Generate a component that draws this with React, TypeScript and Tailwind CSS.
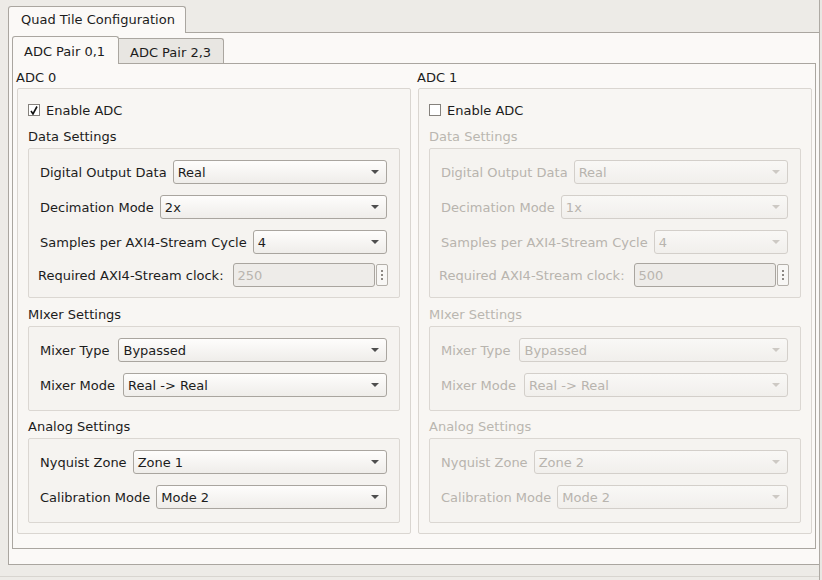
import React from 'react';

type Field = { label: string; value: string; shift?: number };

interface SectionProps {
  title: string;
  fields: Field[];
  disabled: boolean;
  extra?: string;
}

const Arrow = ({ disabled }: { disabled: boolean }) => (
  <svg width="8" height="4" viewBox="0 0 8 4">
    <path d="M0 0H8L4 4Z" fill={disabled ? '#cdc9c4' : '#4e4e4e'} />
  </svg>
);

const Combo = ({ value, disabled }: { value: string; disabled: boolean }) => (
  <div
    className={`flex-1 h-[24px] flex items-center justify-between rounded-[3px] border pl-[4px] pr-[7px] ${
      disabled
        ? 'border-[#d3cfca] bg-linear-to-b from-[#f9f8f6] to-[#f1efec] text-[#b8b4ae]'
        : 'border-[#a9a59f] bg-linear-to-b from-[#fefdfc] to-[#efedea] text-[#1c1c1c]'
    }`}
  >
    <span className="pt-px">{value}</span>
    <Arrow disabled={disabled} />
  </div>
);

const ClockRow = ({ value, disabled }: { value: string; disabled: boolean }) => (
  <div className="flex items-center h-[24px] -ml-[2px] -mr-[1px] -mt-[2px]">
    <span className={`pt-px whitespace-nowrap ${disabled ? 'text-[#b8b4ae]' : ''}`}>Required AXI4-Stream clock:</span>
    <div className="flex-1 ml-[9px] h-[24px] flex items-center rounded-[3px] border border-[#a9a59f] bg-[#eeece9] pl-[4px] pt-px text-[#b9b5af]">
      {value}
    </div>
    <div className="ml-[1px] w-[12px] h-[22px] rounded-[2px] border border-[#b3afa9] bg-[#f8f7f5] flex flex-col items-center justify-center gap-[2px]">
      <span className="w-[2px] h-[2px] bg-[#8c8883]" />
      <span className="w-[2px] h-[2px] bg-[#8c8883]" />
      <span className="w-[2px] h-[2px] bg-[#8c8883]" />
    </div>
  </div>
);

const Section: React.FC<SectionProps> = ({ title, fields, disabled, extra }) => (
  <>
    <div className={`h-[16px] pt-px ${disabled ? 'text-[#bab6b0]' : ''}`}>{title}</div>
    <div
      className={`mt-[4px] border border-[#dbd7d2] rounded-[2px] bg-[#f5f3f0] pt-[11px] pl-[11px] pr-[12px] flex flex-col gap-[11px] ${
        extra ? 'pb-[10px]' : 'pb-[13px]'
      }`}
    >
      {fields.map(f => (
        <div key={f.label} className="flex items-center h-[24px]">
          <span className={`pt-px whitespace-nowrap ${disabled ? 'text-[#b8b4ae]' : ''}`}>{f.label}</span>
          <div className={`flex-1 flex ${f.shift === 3 ? 'ml-[9px]' : f.shift === 2 ? 'ml-[8px]' : 'ml-[6px]'}`}>
            <Combo value={f.value} disabled={disabled} />
          </div>
        </div>
      ))}
      {extra && <ClockRow value={extra} disabled={disabled} />}
    </div>
  </>
);

interface AdcProps {
  name: string;
  enabled: boolean;
  decimation: string;
  clock: string;
  zone: string;
}

const AdcColumn: React.FC<AdcProps> = ({ name, enabled, decimation, clock, zone }) => {
  const off = !enabled;
  return (
    <div className="w-[394px] flex flex-col">
      <div className="h-[16px] -ml-px pt-px">{name}</div>
      <div className="mt-[3px] h-[446px] border border-[#dad6d1] rounded-[2px] bg-[#f8f6f3] px-[10px] flex flex-col">
        <div className="mt-[11px] h-[20px] flex items-center">
          <div className="w-[12px] h-[12px] border border-[#85817c] bg-white flex items-center justify-center">
            {enabled && (
              <svg width="8" height="9" viewBox="0 0 8 9">
                <path d="M1 5 L3 8 L7 0.5" stroke="#111" strokeWidth="1.6" fill="none" />
              </svg>
            )}
          </div>
          <span className="ml-[6px] pt-px">Enable ADC</span>
        </div>
        <div className="mt-[8px]">
          <Section
            title="Data Settings"
            disabled={off}
            extra={clock}
            fields={[
              { label: 'Digital Output Data', value: 'Real' },
              { label: 'Decimation Mode', value: decimation },
              { label: 'Samples per AXI4-Stream Cycle', value: '4' },
            ]}
          />
        </div>
        <div className="mt-[8px]">
          <Section
            title="MIxer Settings"
            disabled={off}
            fields={[
              { label: 'Mixer Type', value: 'Bypassed', shift: 3 },
              { label: 'Mixer Mode', value: 'Real -> Real', shift: 2 },
            ]}
          />
        </div>
        <div className="mt-[7px]">
          <Section
            title="Analog Settings"
            disabled={off}
            fields={[
              { label: 'Nyquist Zone', value: zone },
              { label: 'Calibration Mode', value: 'Mode 2' },
            ]}
          />
        </div>
      </div>
    </div>
  );
};

const App: React.FC = () => {
  return (
    <div className="w-[822px] h-[580px] flex bg-[#edebe7] text-[13px] leading-[16px] text-[#1c1c1c] font-['DejaVu_Sans','Liberation_Sans',sans-serif] overflow-hidden">
      <div className="w-[819px] flex flex-col">
        {/* outer tab bar */}
        <div className="pt-[6px] pl-[8px] h-[32px] flex">
          <div className="relative z-10 w-[178px] h-[27px] border border-b-0 border-[#aaa6a0] rounded-t-[3px] bg-[#fbf9f7] pl-[12px] pt-[5px]">
            Quad Tile Configuration
          </div>
        </div>
        {/* outer pane */}
        <div className="ml-[8px] w-[811px] h-[533px] border-l border-t border-b border-[#aaa6a0] bg-[#fbf9f7] pt-[3px] pl-[3px]">
          <div className="flex items-end h-[27px]">
            <div className="relative z-10 w-[107px] h-[28px] -mb-px border border-b-0 border-[#aaa6a0] rounded-t-[3px] bg-[#fbf9f7] pl-[11px] pt-[7px]">
              ADC Pair 0,1
            </div>
            <div className="w-[105px] h-[25px] border-t border-r border-[#aaa6a0] rounded-tr-[3px] bg-[#e8e6e2] pl-[11px] pt-[6px]">
              ADC Pair 2,3
            </div>
          </div>
          {/* inner pane */}
          <div className="w-[804px] h-[486px] border border-[#aaa6a0] bg-[#fbf9f7] pt-[5px] pl-[4px] flex gap-[7px]">
            <AdcColumn name="ADC 0" enabled decimation="2x" clock="250" zone="Zone 1" />
            <AdcColumn name="ADC 1" enabled={false} decimation="1x" clock="500" zone="Zone 2" />
          </div>
        </div>
        <div className="mt-[11px] border-t border-[#d8d5d0]" />
      </div>
      <div className="w-px h-full bg-[#aeaaa4]" />
      <div className="flex-1 bg-[#e9e7e3]" />
    </div>
  );
};

export default App;
